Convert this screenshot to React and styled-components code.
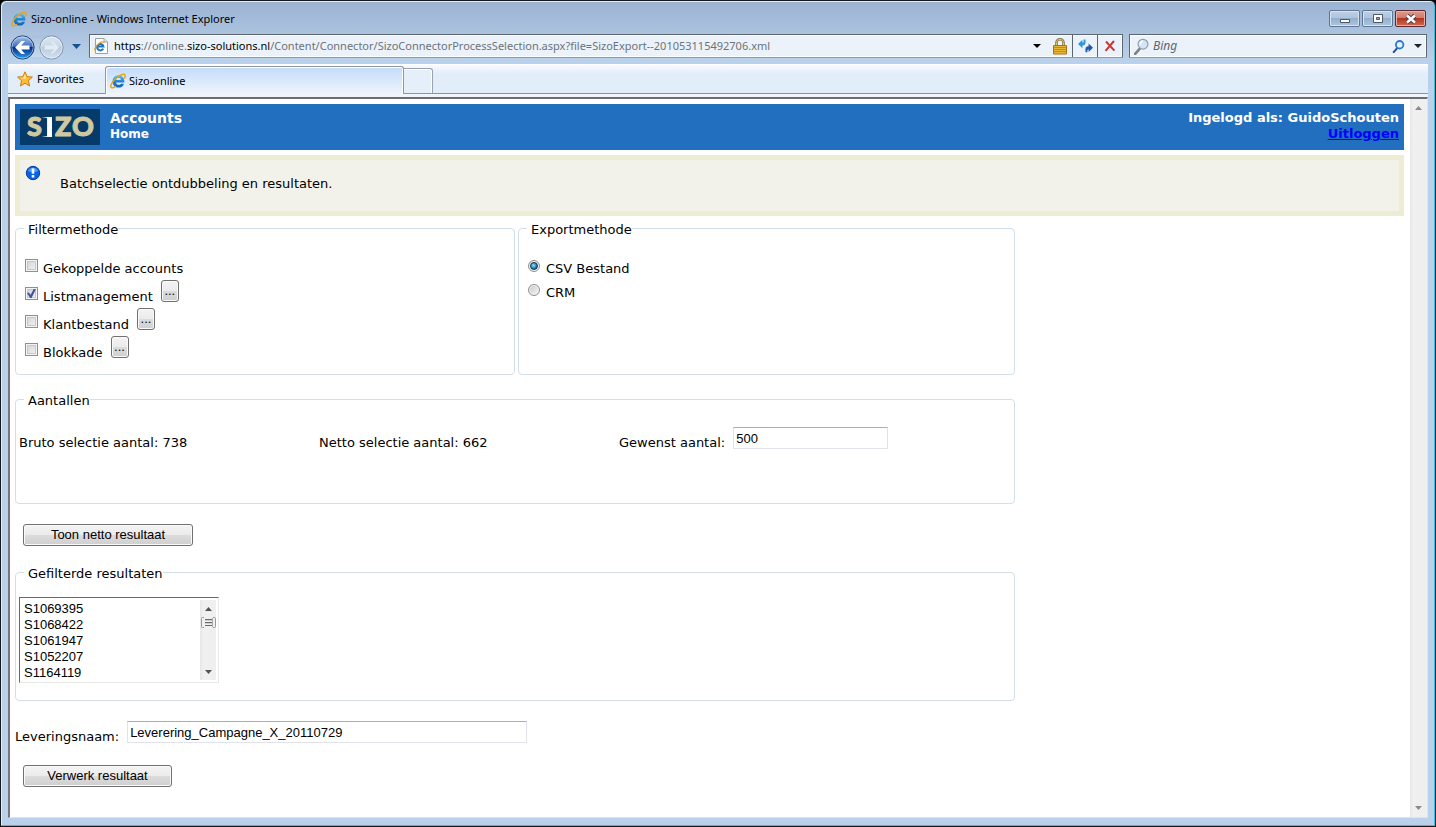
import React from "react";
import styled, { createGlobalStyle, css } from "styled-components";

const ui = '"Noto Sans", "Open Sans", sans-serif';
const verdana = '"DejaVu Sans", sans-serif';
const arial = '"Liberation Sans", sans-serif';

const GlobalStyle = createGlobalStyle`
  *, *::before, *::after { box-sizing: border-box; }
  body { margin: 0; background: #000; }
  button, input, select { margin: 0; font: inherit; color: inherit; }
`;

const Window = styled.div`
  min-height: 100vh;
  display: flex;
  flex-direction: column;
  padding: 0 7px 8px;
  border: 1px solid #15181c;
  border-radius: 6px 6px 0 0;
  background: linear-gradient(#9ab3d1 0, #b9d1ea 60px, #b9d1ea 100%);
  box-shadow: inset -1px -1px #2fc4e0, inset 1px 1px #e4eef8;
  font: 12px/16px ${ui};
  color: #000;
`;

const TitleBar = styled.header`
  display: flex;
  align-items: center;
  gap: 4px;
  height: 33px;
  padding: 2px 2px 0 3px;
`;

const WindowTitle = styled.h1`
  flex: 1;
  margin: 0;
  font: 11px/16px ${ui};
`;

const WindowButtons = styled.div`
  display: flex;
  gap: 2px;
`;

const WindowButton = styled.button`
  display: grid;
  place-items: center;
  width: 31px;
  height: 17px;
  padding: 0;
  border: 1px solid ${(p) => (p.$close ? "#5d2730" : "#5f7690")};
  border-radius: 2px;
  box-shadow: inset 0 0 0 1px ${(p) => (p.$close ? "#e8b0a6" : "#d6e4f2")};
  background: ${(p) =>
    p.$close
      ? "linear-gradient(#dd9a8c 0, #d0786a 50%, #b53420 50%, #d06a50 100%)"
      : "linear-gradient(#bccfe4 0, #adc4dd 50%, #93afcc 50%, #adc7e2 100%)"};
`;

const NavRow = styled.nav`
  display: flex;
  align-items: center;
  height: 24px;
  margin: 0 1px 6px 2px;
`;

const History = styled.div`
  display: flex;
  align-items: center;
  gap: 4px;
  height: 22px;
  border-radius: 12px;
  background: linear-gradient(#a9c0dc, #c6d9ee);
`;

const PlainButton = styled.button`
  display: grid;
  place-items: center;
  padding: 0;
  border: 0;
  background: none;
  width: ${(p) => p.$w || 24}px;
  height: 22px;
`;

const Field = styled.div`
  display: flex;
  align-items: center;
  height: 24px;
  border: 1px solid #5c6670;
  border-bottom-color: #8c9aa9;
  border-radius: 1px;
  background: #ebf2fa;
  box-shadow: inset 0 0 0 1px #fbfdff;
`;

const AddressField = styled(Field)`
  flex: 1;
  min-width: 0;
  margin: 0 6px 0 1px;
  padding-left: 3px;
`;

const Address = styled.span`
  flex: 1;
  min-width: 0;
  margin-left: 5px;
  font: 11px/16px ${ui};
  color: #6d7278;
  white-space: nowrap;
  overflow: hidden;
`;

const Ink = styled.span`
  color: #000;
`;

const FieldButton = styled(PlainButton)`
  width: 25px;
  border-left: 1px solid #5c6670;
`;

const SearchField = styled(Field)`
  width: 298px;
  padding: 0 0 0 4px;
`;

const SearchInput = styled.input`
  flex: 1;
  min-width: 0;
  padding: 0 0 0 4px;
  border: 0;
  outline: 0;
  background: none;
  font: italic 12px/16px ${ui};
  &::placeholder { color: #5e6670; opacity: 1; }
`;

const CommandBar = styled.div`
  display: flex;
  align-items: flex-end;
  height: 30px;
  border-top: 1px solid #fff;
  border-bottom: 1px solid #8b95a5;
  background: linear-gradient(#f8fbfe 0, #e1edf9 9px, #e1edf9 100%);
`;

const Favorites = styled.button`
  display: flex;
  align-items: center;
  gap: 4px;
  width: 97px;
  height: 28px;
  padding: 0 0 1px 9px;
  border: 0;
  background: none;
  font: 11px/16px ${ui};
`;

const Tab = styled.div`
  display: flex;
  align-items: center;
  gap: 3px;
  width: 299px;
  height: 28px;
  margin-bottom: -1px;
  padding-left: 4px;
  border: 1px solid #8f98a6;
  border-bottom: 0;
  border-radius: 3px 3px 0 0;
  background: linear-gradient(#c3dcf9, #eff4fc);
  box-shadow: inset 1px 1px #fff, inset -1px 0 #fff;
  font: 11px/16px ${ui};
`;

const NewTab = styled.button`
  width: 29px;
  height: 25px;
  padding: 0;
  border: 1px solid #9aa2b0;
  border-left: 0;
  border-bottom: 0;
  border-radius: 0 3px 0 0;
  background: #e5effa;
  box-shadow: inset -1px 1px #fff;
`;

const Viewport = styled.div`
  flex: 1;
  display: flex;
  margin-top: 3px;
  border: 1px solid #e3e3e3;
  border-top: 2px solid #6e6e72;
  border-left: 2px solid #77777b;
  background: #fff;
  box-shadow: 0 -3px #f0f4fb;
`;

const Page = styled.main`
  flex: 1;
  min-width: 0;
  padding: 5px 6px 0 5px;
  font: 13px/16px ${verdana};
`;

const ScrollTrack = styled.div`
  display: flex;
  flex-direction: column;
  align-items: center;
  flex: none;
  width: ${(p) => (p.$small ? 16 : 17)}px;
  padding: ${(p) => (p.$small ? "7px 0 6px" : "7px 0")};
  background: linear-gradient(90deg, #e6e6e6 0, #f0f0f0 3px, #efefef 100%);
`;

const Push = styled.span`
  flex: 1;
`;

const Banner = styled.div`
  display: flex;
  gap: 10px;
  height: 46px;
  padding: 5px;
  background: #236fbf;
  color: #fff;
  font-weight: bold;
`;

const BannerText = styled.div`
  flex: 1;
  padding-top: 1px;
  text-align: ${(p) => (p.$end ? "right" : "left")};
`;

const BannerLine = styled.div`
  font-size: ${(p) => p.$size || 13}px;
  line-height: 16px;
`;

const Logout = styled.a`
  color: #0000ff;
`;

const Notice = styled.div`
  display: flex;
  align-items: flex-start;
  gap: 19px;
  height: 61px;
  margin: 5px 0 2px;
  padding: 5px;
  border: 5px solid #eeecd2;
  background: #f3f2ea;
`;

const NoticeText = styled.p`
  margin: 11px 0 0;
`;

const Form = styled.form`
  max-width: 1000px;
`;

const Columns = styled.div`
  display: grid;
  grid-template-columns: 500fr 497fr;
  gap: 3px;
  margin-bottom: 14px;
`;

const Group = styled.fieldset`
  min-width: 0;
  min-height: ${(p) => p.$h}px;
  margin: 0;
  padding: ${(p) => p.$top || 0}px 0 0 ${(p) => p.$left || 3}px;
  border: 1px solid #d3dfe8;
  border-radius: 4px;
`;

const Legend = styled.legend`
  margin-left: ${(p) => p.$shift || 5}px;
  padding: 4px 0 0 4px;
  line-height: 16px;
`;

const OptionRow = styled.div`
  display: flex;
  align-items: flex-start;
  height: ${(p) => p.$h}px;
`;

const OptionLabel = styled.label`
  margin: 9px 8px 0 5px;
`;

const mark = css`
  appearance: none;
  flex: none;
  width: 13px;
  height: 13px;
  border: 1px solid #8e8f8f;
  display: grid;
  place-items: center;
`;

const CheckBox = styled.input`
  ${mark}
  margin-top: 7px;
  background: linear-gradient(135deg, #cbcfd5, #f6f6f6);
  box-shadow: inset 0 0 0 1px #f4f4f4, inset 0 0 0 2px #c4c9d0;
  &:checked::before {
    content: "";
    width: 9px;
    height: 9px;
    background: #3f549c;
    clip-path: polygon(0 45%, 20% 40%, 40% 65%, 75% 0, 100% 0, 50% 100%, 35% 100%);
  }
`;

const Radio = styled.input`
  ${mark}
  margin-top: 8px;
  width: 12px;
  height: 12px;
  border-radius: 50%;
  background: linear-gradient(135deg, #c4c7ca, #f8f8f8);
  box-shadow: inset 0 0 0 1px #f4f4f4;
  &:checked::before {
    content: "";
    width: 8px;
    height: 8px;
    border: 1px solid #173350;
    border-radius: 50%;
    background: radial-gradient(circle at 40% 40%, #8fe0fa, #1a80b4 60%, #0b3b5c);
  }
`;

const RadioLabel = styled(OptionLabel)`
  margin-left: 6px;
`;

const PushButton = styled.button`
  display: block;
  width: ${(p) => p.$w}px;
  height: 22px;
  padding: 0;
  border: 1px solid #707070;
  border-radius: 3px;
  background: linear-gradient(#f4f4f4 0, #ebebeb 48%, #dcdcdc 50%, #cfcfcf 100%);
  box-shadow: inset 0 0 0 1px #fafafa;
  font: 13px/16px ${arial};
`;

const FormButton = styled(PushButton)`
  margin: 20px 0 16px 8px;
`;

const Counts = styled.div`
  display: grid;
  grid-template-columns: 300px 300px 1fr;
  align-items: start;
`;

const Count = styled.div`
  padding-top: 8px;
`;

const Labelled = styled.div`
  display: flex;
  align-items: flex-start;
  gap: 8px;
`;

const FormRow = styled(Labelled)`
  margin-top: 20px;
`;

const FieldLabel = styled.label`
  padding-top: 8px;
`;

const TextInput = styled.input`
  width: ${(p) => p.$w}px;
  height: 22px;
  padding: 0 2px;
  border: 1px solid #e2e3ea;
  border-top-color: #abadb3;
  outline: 0;
  background: #fff;
  font: 13px/16px ${arial};
`;

const ListFrame = styled.div`
  display: flex;
  width: 200px;
  height: 86px;
  padding: 2px;
  border: 1px solid #e8e8e8;
  border-top-color: #696969;
  border-left-color: #696969;
`;

const ListBox = styled.select`
  flex: 1;
  min-width: 0;
  padding: 1px 0 0;
  border: 0;
  outline: 0;
  background: #fff;
  font: 13px/16px ${arial};
  overflow: hidden;
  scrollbar-width: none;
`;

const ListItem = styled.option`
  height: 16px;
  min-height: 16px;
  padding: 0 2px;
  line-height: 16px;
`;

function IeIcon() {
  return (
    <svg width="16" height="16" viewBox="0 0 16 16" aria-hidden="true">
      <defs>
        <linearGradient id="ie" x1="0" y1="0" x2="0" y2="1">
          <stop offset="0" stopColor="#5cc4f6" />
          <stop offset=".5" stopColor="#1d86d8" />
          <stop offset="1" stopColor="#1560b4" />
        </linearGradient>
      </defs>
      <path
        d="M8.4 2.2C12 2.2 14.3 4.8 14.3 8.2V9.4H6.1C6.3 11 7.3 11.8 8.7 11.8C9.8 11.8 10.5 11.4 10.9 10.7H14C13.2 13.2 11.2 14.6 8.6 14.6C5.1 14.6 2.6 12.1 2.6 8.5C2.6 4.8 5 2.2 8.4 2.2ZM6.2 7.1H10.9C10.7 5.6 9.9 4.8 8.6 4.8C7.3 4.8 6.4 5.6 6.2 7.1Z"
        fill="url(#ie)"
        fillRule="evenodd"
      />
      <path d="M5.4 13.6C3.2 15 1.4 15.3.9 14.2C.1 12.2 3 7.4 7.4 4C10.8 1.4 14.2.4 15 2C15.4 2.8 15.1 4 14.5 5.1" fill="none" stroke="#e8a51a" strokeWidth="1.5" strokeLinecap="round" />
    </svg>
  );
}

function Arrow({ up, color = "#555", w = 7, h = 4 }) {
  return (
    <svg width={w} height={h} viewBox="0 0 8 4" preserveAspectRatio="none" aria-hidden="true">
      <path d={up ? "M0 4 4 0 8 4Z" : "M0 0H8L4 4Z"} fill={color} />
    </svg>
  );
}

function HistoryIcon({ forward }) {
  const id = forward ? "fwd" : "bck";
  return (
    <svg width="25" height="25" viewBox="0 0 25 25" aria-hidden="true">
      <defs>
        <linearGradient id={id} x1="0" y1="0" x2="0" y2="1">
          <stop offset="0" stopColor={forward ? "#dbe7f2" : "#a9c4ea"} />
          <stop offset=".45" stopColor={forward ? "#c9d8e7" : "#3f72c0"} />
          <stop offset=".5" stopColor={forward ? "#b9cbdd" : "#062c86"} />
          <stop offset="1" stopColor={forward ? "#d3e2f0" : "#2fa0f0"} />
        </linearGradient>
      </defs>
      <circle cx="12.5" cy="12.5" r="11.6" fill={`url(#${id})`} stroke={forward ? "#7f93ab" : "#24406f"} />
      <circle cx="12.5" cy="12.5" r="10.6" fill="none" stroke="#fff" strokeOpacity=".45" />
      <path
        d={forward ? "M19.8 12.5 14 6.4H11.6L15 10.6H5.6V14.4H15L11.6 18.6H14Z" : "M5.2 12.5 11.4 6H15L11.2 10.6H19.5V14.4H11.2L15 19H11.4Z"}
        fill={forward ? "#e3ecf5" : "#fff"}
      />
    </svg>
  );
}

function StarIcon() {
  return (
    <svg width="16" height="16" viewBox="0 0 16 16" aria-hidden="true">
      <path d="M8 .8 10.1 5.6 15.4 6.1 11.4 9.7 12.6 15 8 12.2 3.4 15 4.6 9.7.6 6.1 5.9 5.6Z" fill="#fdbd33" stroke="#cf7d12" strokeLinejoin="round" />
      <path d="M8 3 9.3 6.5 8 8Z M8 3 6.7 6.5 2.8 7 8 8Z" fill="#ffe9a0" />
    </svg>
  );
}

function PageIcon() {
  return (
    <svg width="16" height="18" viewBox="0 0 16 18" aria-hidden="true">
      <path d="M2.5 1.5H11L14.5 5V16.5H2.5Z" fill="#fff" stroke="#99a0a8" />
      <path d="M11 1.5V5H14.5" fill="#e6e9ec" stroke="#99a0a8" />
      <path d="M10.2 11.6A3.2 3.2 0 1 1 10.4 9.4H4.6" fill="none" stroke="#1d74c6" strokeWidth="2" />
      <path d="M3 13.8C.2 13.4 2.4 8.8 6.4 6 9 4.4 11.2 4.4 10.8 6.2" fill="none" stroke="#e9a81c" strokeWidth="1.2" />
    </svg>
  );
}

function LockIcon() {
  return (
    <svg width="14" height="17" viewBox="0 0 14 17" aria-hidden="true">
      <path d="M3.5 8V4.5A3.5 3.2 0 0 1 10.5 4.5V8" fill="none" stroke="#8a7440" strokeWidth="2.6" />
      <path d="M3.5 8V4.5A3.5 3.2 0 0 1 10.5 4.5V8" fill="none" stroke="#d9c27c" strokeWidth="1" />
      <path d="M.5 7.5H13.5V16H.5Z" fill="#eab734" stroke="#a67712" />
      <path d="M1 9.5H13M1 11.5H13M1 13.5H13" stroke="#c38c1c" />
    </svg>
  );
}

function RefreshIcon() {
  return (
    <svg width="15" height="14" viewBox="0 0 15 14" aria-hidden="true">
      <path d="M0 5 4.4.8V3.4H5.4Q5.8 2.2 5.6.6L7.4.6Q8.4 6.4 5 6.6H4.4V9.2Z" fill="#2f96dc" />
      <path d="M15 8.8 10.6 4.6V7.2H10Q6.6 7.4 7.6 13.2H9.4Q9.2 11.6 9.8 10.4H10.6V13Z" fill="#2059ac" />
    </svg>
  );
}

function StopIcon() {
  return (
    <svg width="12" height="12" viewBox="0 0 12 12" aria-hidden="true">
      <path d="M2 1.5 10.4 10.6M10 1 1.5 10.8" fill="none" stroke="#cf3434" strokeWidth="2" />
    </svg>
  );
}

function GlassIcon({ blue }) {
  return (
    <svg width={blue ? 13 : 15} height={blue ? 13 : 17} viewBox="0 0 15 17" aria-hidden="true">
      <path d="M5.8 10.6 1.2 15.8" stroke={blue ? "#1e4aa0" : "#7c8087"} strokeWidth="2.6" strokeLinecap="round" />
      <circle cx="9" cy="6.2" r="4.9" fill={blue ? "#e3f3fc" : "#cfe6f7"} stroke={blue ? "#2b7bd0" : "#969ca6"} strokeWidth={blue ? 2.4 : 1.2} />
      {!blue && <path d="M6 6.4A3.2 3.2 0 0 1 9 3.2" fill="none" stroke="#fff" strokeWidth="1.4" />}
    </svg>
  );
}

function InfoIcon() {
  return (
    <svg width="16" height="16" viewBox="0 0 16 16" aria-hidden="true">
      <circle cx="8" cy="8" r="6.7" fill="#0a62e0" stroke="#0a3f9e" />
      <path d="M3 6A5.5 5.5 0 0 1 13 6Q8 8.6 3 6Z" fill="#4e9cf7" />
      <path d="M6.7 3.4H9.3V8.8H6.7ZM6.7 10H9.3V12.4H6.7Z" fill="#fff" />
    </svg>
  );
}

const LogoText = styled.text`
  font: 900 27px Lato, sans-serif;
  fill: #cfc8a0;
  stroke: #cfc8a0;
  stroke-width: 1;
`;

function SizoLogo() {
  return (
    <svg width="80" height="36" viewBox="0 0 80 36" role="img" aria-label="SIZO">
      <defs>
        <linearGradient id="stem" x1="0" x2="1">
          <stop offset="0" stopColor="#14507e" />
          <stop offset=".6" stopColor="#fff" />
        </linearGradient>
      </defs>
      <path d="M0 0H80V36H0Z" fill="#063a68" />
      <LogoText x="7" y="27">S</LogoText>
      <path d="M22 8H32V28H22V27H27V9H22Z" fill="url(#stem)" />
      <LogoText x="35" y="27">Z</LogoText>
      <LogoText x="52" y="27">O</LogoText>
    </svg>
  );
}

function ThumbIcon() {
  return (
    <svg width="15" height="11" viewBox="0 0 15 11" aria-hidden="true">
      <path d="M3 .5H1.5Q.5.5.5 1.5V9.5Q.5 10.5 1.5 10.5H3M12 .5H13.5Q14.5.5 14.5 1.5V9.5Q14.5 10.5 13.5 10.5H12" fill="none" stroke="#999" />
      <path d="M4 2.5H11M4 5.5H11M4 8.5H11" stroke="#6a6a6a" />
      <path d="M4 3.5H11M4 6.5H11" stroke="#d0d0d0" />
      <path d="M11.5 1V10" stroke="#aaa" />
    </svg>
  );
}

const ThumbSlot = styled.span`
  display: flex;
  margin-top: 6px;
`;

const filters = [
  { id: "gekoppeld", label: "Gekoppelde accounts" },
  { id: "list", label: "Listmanagement", checked: true, more: true },
  { id: "klant", label: "Klantbestand", more: true },
  { id: "blokkade", label: "Blokkade", more: true },
];

const results = ["S1069395", "S1068422", "S1061947", "S1052207", "S1164119"];

export default function App() {
  return (
    <>
      <GlobalStyle />
      <Window>
        <TitleBar>
          <IeIcon />
          <WindowTitle>Sizo-online - Windows Internet Explorer</WindowTitle>
          <WindowButtons>
            <WindowButton aria-label="Minimize">
              <svg width="12" height="12" viewBox="0 0 12 12"><path d="M1.5 6.5H10.5V9.5H1.5Z" fill="#fff" stroke="#4f5565" /></svg>
            </WindowButton>
            <WindowButton aria-label="Restore">
              <svg width="12" height="12" viewBox="0 0 12 12"><path d="M1.5 1.5H10.5V9.5H1.5ZM4.5 4.5V6.5H7.5V4.5Z" fill="#fff" fillRule="evenodd" stroke="#4f5565" /></svg>
            </WindowButton>
            <WindowButton $close aria-label="Close">
              <svg width="12" height="12" viewBox="0 0 12 12">
                <path d="M2 2.5 10 9.5M10 2.5 2 9.5" stroke="#4f4552" strokeWidth="4.4" />
                <path d="M2 2.5 10 9.5M10 2.5 2 9.5" stroke="#fff" strokeWidth="2.4" />
              </svg>
            </WindowButton>
          </WindowButtons>
        </TitleBar>

        <NavRow>
          <History>
            <PlainButton $w={25} aria-label="Back"><HistoryIcon /></PlainButton>
            <PlainButton $w={25} aria-label="Forward"><HistoryIcon forward /></PlainButton>
          </History>
          <PlainButton aria-label="Recent pages"><Arrow color="#16528e" w={9} h={5} /></PlainButton>
          <AddressField>
            <PageIcon />
            <Address role="textbox" aria-label="Address">
              <Ink>https</Ink>://online.<Ink>sizo-solutions.nl</Ink>/Content/Connector/SizoConnectorProcessSelection.aspx?file=SizoExport--201053115492706.xml
            </Address>
            <PlainButton $w={21} aria-label="Show address list"><Arrow color="#000" w={8} h={4} /></PlainButton>
            <PlainButton $w={25} aria-label="Security report"><LockIcon /></PlainButton>
            <FieldButton aria-label="Refresh"><RefreshIcon /></FieldButton>
            <FieldButton aria-label="Stop"><StopIcon /></FieldButton>
          </AddressField>
          <SearchField>
            <GlassIcon />
            <SearchInput aria-label="Search" placeholder="Bing" />
            <PlainButton aria-label="Search"><GlassIcon blue /></PlainButton>
            <PlainButton $w={16} aria-label="Search options"><Arrow color="#222" w={8} h={4} /></PlainButton>
          </SearchField>
        </NavRow>

        <CommandBar>
          <Favorites><StarIcon />Favorites</Favorites>
          <Tab><IeIcon />Sizo-online</Tab>
          <NewTab aria-label="New tab" />
        </CommandBar>

        <Viewport>
          <Page>
            <Banner>
              <SizoLogo />
              <BannerText>
                <BannerLine $size={14}>Accounts</BannerLine>
                <BannerLine $size={12}>Home</BannerLine>
              </BannerText>
              <BannerText $end>
                <BannerLine>Ingelogd als: GuidoSchouten</BannerLine>
                <BannerLine><Logout href="#uitloggen">Uitloggen</Logout></BannerLine>
              </BannerText>
            </Banner>

            <Notice>
              <InfoIcon />
              <NoticeText>Batchselectie ontdubbeling en resultaten.</NoticeText>
            </Notice>

            <Form onSubmit={(e) => e.preventDefault()}>
              <Columns>
                <Group $h={157} $top={14} $left={9}>
                  <Legend $shift={-1}>Filtermethode</Legend>
                  {filters.map((f) => (
                    <OptionRow key={f.id} $h={28}>
                      <CheckBox type="checkbox" id={f.id} defaultChecked={f.checked} />
                      <OptionLabel htmlFor={f.id}>{f.label}</OptionLabel>
                      {f.more && <PushButton type="button" $w={18} aria-label={`${f.label} opties`}>...</PushButton>}
                    </OptionRow>
                  ))}
                </Group>
                <Group $h={157} $top={14} $left={9}>
                  <Legend $shift={-1}>Exportmethode</Legend>
                  <OptionRow $h={24}>
                    <Radio type="radio" name="export" id="csv" defaultChecked />
                    <RadioLabel htmlFor="csv">CSV Bestand</RadioLabel>
                  </OptionRow>
                  <OptionRow $h={24}>
                    <Radio type="radio" name="export" id="crm" />
                    <RadioLabel htmlFor="crm">CRM</RadioLabel>
                  </OptionRow>
                </Group>
              </Columns>

              <Group $h={115} $top={18}>
                <Legend>Aantallen</Legend>
                <Counts>
                  <Count>Bruto selectie aantal: 738</Count>
                  <Count>Netto selectie aantal: 662</Count>
                  <Labelled>
                    <FieldLabel htmlFor="gewenst">Gewenst aantal:</FieldLabel>
                    <TextInput $w={155} id="gewenst" defaultValue="500" />
                  </Labelled>
                </Counts>
              </Group>

              <FormButton type="button" $w={170}>Toon netto resultaat</FormButton>

              <Group $h={139} $top={15}>
                <Legend>Gefilterde resultaten</Legend>
                <ListFrame>
                  <ListBox size={5} aria-label="Gefilterde resultaten">
                    {results.map((r) => <ListItem key={r}>{r}</ListItem>)}
                  </ListBox>
                  <ScrollTrack $small aria-hidden="true">
                    <Arrow up />
                    <ThumbSlot><ThumbIcon /></ThumbSlot>
                    <Push />
                    <Arrow />
                  </ScrollTrack>
                </ListFrame>
              </Group>

              <FormRow>
                <FieldLabel htmlFor="levering">Leveringsnaam:</FieldLabel>
                <TextInput $w={400} id="levering" defaultValue="Leverering_Campagne_X_20110729" />
              </FormRow>
              <FormButton type="submit" $w={149}>Verwerk resultaat</FormButton>
            </Form>
          </Page>
          <ScrollTrack aria-hidden="true">
            <Arrow up color="#8a8a8a" />
            <Push />
            <Arrow color="#8a8a8a" />
          </ScrollTrack>
        </Viewport>
      </Window>
    </>
  );
}
